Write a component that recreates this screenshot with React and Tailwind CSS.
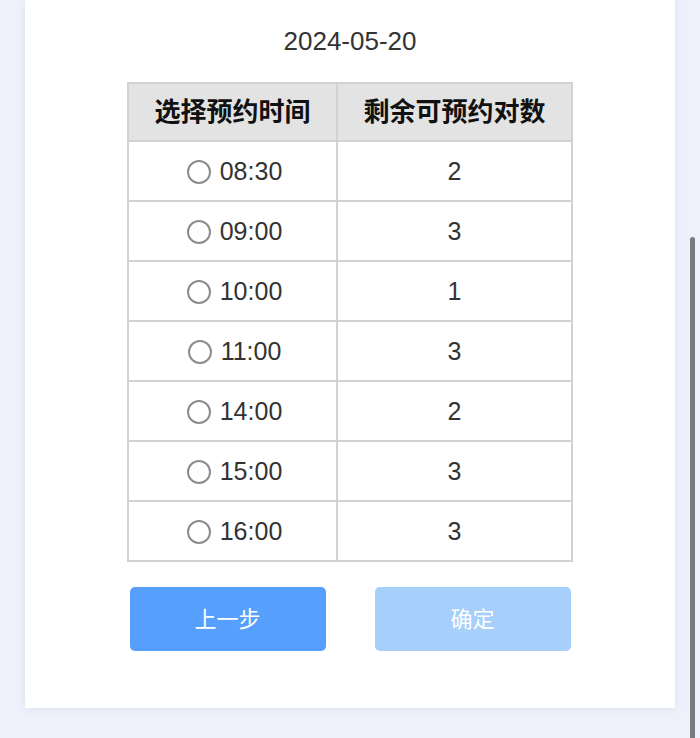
import React from "react";

const rows = [
  ["08:30", "2"],
  ["09:00", "3"],
  ["10:00", "1"],
  ["11:00", "3"],
  ["14:00", "2"],
  ["15:00", "3"],
  ["16:00", "3"],
];

export default function App() {
  return (
    <div
      className="relative h-[738px] w-[700px] overflow-hidden bg-[#eef1fc]"
      style={{ fontFamily: '"Liberation Sans", "Noto Sans CJK SC", sans-serif' }}
    >
      <div className="ml-[25px] flex h-[708px] w-[650px] flex-col items-center bg-white pt-[24px] shadow-[0_1px_8px_rgba(0,0,0,0.07)]">
        <div className="h-[34px] text-[26px] leading-[34px] text-[#333]">2024-05-20</div>
        <div className="mt-[24px] w-[446px] border-l-2 border-t-2 border-[#d2d2d2]">
          <div className="flex">
            <div className="flex h-[58px] w-[209px] items-center justify-center border-b-2 border-r-2 border-[#d2d2d2] bg-[#e3e3e3] text-[26px] font-bold text-[#111]">
              选择预约时间
            </div>
            <div className="flex h-[58px] w-[235px] items-center justify-center border-b-2 border-r-2 border-[#d2d2d2] bg-[#e3e3e3] text-[26px] font-bold text-[#111]">
              剩余可预约对数
            </div>
          </div>
          {rows.map(([t, n]) => (
            <div key={t} className="flex">
              <div className="flex h-[60px] w-[209px] items-center justify-center gap-[9px] border-b-2 border-r-2 border-[#d2d2d2] pl-[4px] pt-[2px]">
                <span className="box-border h-[24px] w-[24px] rounded-full border-2 border-[#8c8c8c]" />
                <span className="text-[25px] text-[#333]">{t}</span>
              </div>
              <div className="flex h-[60px] w-[235px] items-center justify-center border-b-2 border-r-2 border-[#d2d2d2] pt-[2px] text-[25px] text-[#333]">
                {n}
              </div>
            </div>
          ))}
        </div>
        <div className="mt-[25px] flex gap-[49px]">
          <button className="flex h-[64px] w-[196px] items-center justify-center rounded-[5px] bg-[#569ffc] text-[22px] text-white">
            上一步
          </button>
          <button className="flex h-[64px] w-[196px] items-center justify-center rounded-[5px] bg-[#a6cffc] text-[22px] text-white">
            确定
          </button>
        </div>
      </div>
      <div className="absolute left-[690px] top-[237px] h-[520px] w-[5px] rounded-full bg-[#7a7a7e]" />
    </div>
  );
}
